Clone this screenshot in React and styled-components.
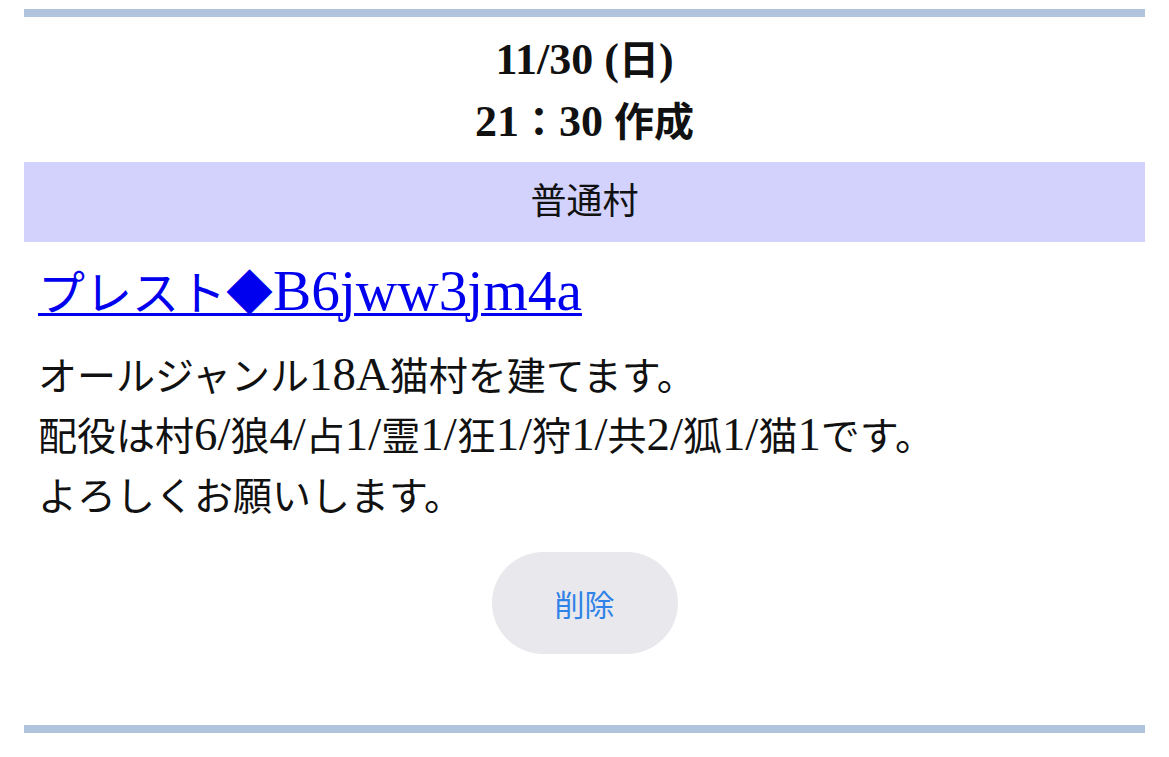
import React from 'react';
import styled, {createGlobalStyle} from 'styled-components';

const GlobalStyle = createGlobalStyle`
  body {
    margin: 0;
    background: #fff;
    color: #111;
    font-family: "Liberation Serif", "Noto Sans CJK JP", serif;
  }
`;

const Page = styled.div`
  padding: 9px 24px 0;
  height: 757px;
  overflow: hidden;
  box-sizing: border-box;
`;

const Card = styled.section`
  border-top: 8px solid #b0c4de;
  padding-bottom: 71px;
`;

const Stamp = styled.div`
  padding: 13px 0 8px;
  text-align: center;
  font-weight: bold;
  font-size: 40px;
  line-height: 62px;
`;

const Rule = styled.div`
  background: #d2d2fd;
  height: 80px;
  line-height: 80px;
  text-align: center;
  font-size: 36px;
`;

const Body = styled.div`
  padding: 20px 14px 0;
`;

const Author = styled.a`
  display: block;
  font-size: 47px;
  line-height: 56px;
  color: #0000ee;
  text-decoration: underline;
  text-decoration-thickness: 3px;
  text-underline-offset: 3px;
`;

const Message = styled.p`
  margin: 25px 0 0;
  font-size: 39px;
  line-height: 60px;
`;

// latin glyphs sit larger next to kana, as in a mincho face
const Latin = styled.span`
  font-size: ${(p) => p.$scale}em;
  line-height: 1;
`;

const Actions = styled.div`
  display: flex;
  justify-content: center;
  padding-top: 25px;
`;

const DeleteButton = styled.button`
  width: 186px;
  height: 102px;
  border: none;
  border-radius: 51px;
  background: #e9e9ed;
  color: #2f82e8;
  font-family: "Noto Sans CJK JP", sans-serif;
  font-size: 30px;
  cursor: pointer;
`;

const Mixed = ({text, scale}) =>
  text.split(/([\x20-\x7e]+)/).map((part, i) =>
    i % 2 ? <Latin key={i} $scale={scale}>{part}</Latin> : part
  );

const posts = [
  {
    date: '11/30 (日)',
    time: '21：30 作成',
    rule: '普通村',
    author: 'プレスト◆B6jww3jm4a',
    lines: [
      'オールジャンル18A猫村を建てます。',
      '配役は村6/狼4/占1/霊1/狂1/狩1/共2/狐1/猫1です。',
      'よろしくお願いします。',
    ],
  },
  {
    date: '11/30 (日)',
    time: '20：12 作成',
    rule: '普通村',
    author: 'ゲスト',
    lines: ['よろしくお願いします。'],
  },
];

const Post = ({post}) => (
  <Card>
    <Stamp>
      <div><Mixed text={post.date} scale={1.1} /></div>
      <div><Mixed text={post.time} scale={1.1} /></div>
    </Stamp>
    <Rule>{post.rule}</Rule>
    <Body>
      <Author href="#"><Mixed text={post.author} scale={1.22} /></Author>
      <Message>
        {post.lines.map((line) => (
          <React.Fragment key={line}><Mixed text={line} scale={1.2} /><br /></React.Fragment>
        ))}
      </Message>
    </Body>
    <Actions>
      <DeleteButton>削除</DeleteButton>
    </Actions>
  </Card>
);

const App = () => (
  <Page>
    <GlobalStyle />
    {posts.map((post, i) => <Post key={i} post={post} />)}
  </Page>
);

export default App;
